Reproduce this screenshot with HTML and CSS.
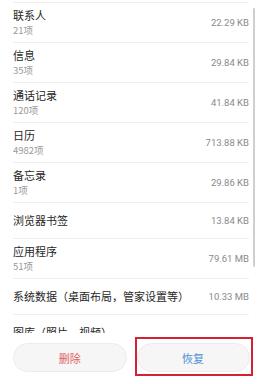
FILE: index.html
```html
<!DOCTYPE html>
<html lang="zh">
<head>
<meta charset="utf-8">
<link rel="stylesheet" href="styles.css">
</head>
<body>
<div class="screen">
  <div class="list-wrap">
    <div class="list">
      <div class="row"><div class="info"><div class="title">联系人</div><div class="sub">21项</div></div><div class="size">22.29 KB</div></div>
      <div class="row"><div class="info"><div class="title">信息</div><div class="sub">35项</div></div><div class="size">29.84 KB</div></div>
      <div class="row"><div class="info"><div class="title">通话记录</div><div class="sub">120项</div></div><div class="size">41.84 KB</div></div>
      <div class="row"><div class="info"><div class="title">日历</div><div class="sub">4982项</div></div><div class="size">713.88 KB</div></div>
      <div class="row"><div class="info"><div class="title">备忘录</div><div class="sub">1项</div></div><div class="size">29.86 KB</div></div>
      <div class="row single"><div class="info"><div class="title">浏览器书签</div></div><div class="size">13.84 KB</div></div>
      <div class="row"><div class="info"><div class="title">应用程序</div><div class="sub">51项</div></div><div class="size">79.61 MB</div></div>
      <div class="row single"><div class="info"><div class="title">系统数据（桌面布局，管家设置等）</div></div><div class="size">10.33 MB</div></div>
      <div class="row single last"><div class="info"><div class="title">图库（照片、视频）</div></div></div>
    </div>
    <div class="scrollbar"></div>
  </div>
  <div class="actions">
    <button class="btn delete">删除</button>
    <div class="highlight"><button class="btn restore">恢复</button></div>
  </div>
</div>
</body>
</html>
```
FILE: styles.css
```css
html, body {
  margin: 0;
  padding: 0;
  background: #ffffff;
}
body {
  font-family: "Noto Sans CJK SC", "Noto Sans", Roboto, sans-serif;
  color: #222;
}
.screen {
  width: 260px;
  height: 384px;
  display: flex;
  flex-direction: column;
  overflow: hidden;
}
.list-wrap {
  position: relative;
  height: 333px;
  overflow: hidden;
  flex: none;
}
.list {
  margin: 2px 11px 0 13px;
  border-top: 1px solid #efefef;
}
.row {
  display: flex;
  align-items: center;
  justify-content: space-between;
  height: 39px;
  border-bottom: 1px solid #efefef;
}
.row.single {
  height: 35px;
}
.title {
  font-size: 11px;
  line-height: 15px;
  color: #262626;
  white-space: nowrap;
}
.sub {
  font-size: 9.5px;
  line-height: 13px;
  color: #9a9a9a;
  margin-top: 1px;
}
.size {
  font-family: Roboto, "Noto Sans", sans-serif;
  font-size: 9.5px;
  color: #8a8a8a;
  white-space: nowrap;
  padding-left: 8px;
}
.scrollbar {
  position: absolute;
  left: 253px;
  top: 8px;
  width: 2px;
  height: 259px;
  background: #cfcfcf;
  border-radius: 1px;
}
.actions {
  flex: 1;
  background: #ffffff;
  display: flex;
  align-items: flex-start;
  padding: 4px 7px 0 13px;
  gap: 8px;
}
.btn {
  font-family: "Noto Sans CJK SC", sans-serif;
  font-size: 11px;
  height: 29px;
  border-radius: 15px;
  background: #f6f6f7;
  border: 1px solid #ececec;
  padding: 0;
  cursor: pointer;
}
.delete {
  width: 114px;
  margin-top: 6px;
  color: #e2625f;
}
.highlight {
  border: 2px solid #d32232;
  padding: 4px 1px 2px 0;
  width: 114px;
}
.restore {
  width: 113px;
  display: block;
  color: #4b8fd6;
}
```
